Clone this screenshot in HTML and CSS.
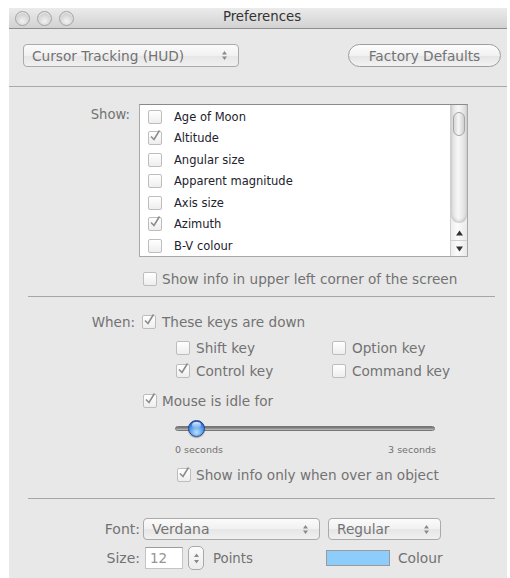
FILE: index.html
```html
<!DOCTYPE html>
<html>
<head>
<meta charset="utf-8">
<title>Preferences</title>
<link rel="stylesheet" href="styles.css">
</head>
<body>
<div class="window">
  <div class="titlebar">
    <div class="lights">
      <span class="light"></span><span class="light"></span><span class="light"></span>
    </div>
    <div class="title">Preferences</div>
  </div>

  <div class="toolbar">
    <div class="popup popup-mode">
      <span class="popup-text">Cursor Tracking (HUD)</span>
      <svg class="arrows" width="7" height="11" viewBox="0 0 7 11"><path d="M3.5 1 L6 4.5 H1 Z M3.5 10 L6 6.5 H1 Z" fill="#8a8a8a"/></svg>
    </div>
    <div class="pill">Factory Defaults</div>
  </div>

  <div class="content">
    <div class="field show-field">
      <div class="label label-show">Show:</div>
      <div class="listbox">
        <div class="rows">
          <div class="item"><span class="box"></span><span>Age of Moon</span></div>
          <div class="item"><span class="box checked"><svg width="14" height="14" viewBox="0 0 14 14"><path d="M3 7.5 L6 10.5 L11.5 1.5" fill="none" stroke="#8c8c8c" stroke-width="1.6"/></svg></span><span>Altitude</span></div>
          <div class="item"><span class="box"></span><span>Angular size</span></div>
          <div class="item"><span class="box"></span><span>Apparent magnitude</span></div>
          <div class="item"><span class="box"></span><span>Axis size</span></div>
          <div class="item"><span class="box checked"><svg width="14" height="14" viewBox="0 0 14 14"><path d="M3 7.5 L6 10.5 L11.5 1.5" fill="none" stroke="#8c8c8c" stroke-width="1.6"/></svg></span><span>Azimuth</span></div>
          <div class="item"><span class="box"></span><span>B-V colour</span></div>
        </div>
        <div class="scrollbar">
          <div class="track"><div class="thumb"></div></div>
          <div class="step step-up"><svg width="7" height="6" viewBox="0 0 7 6"><path d="M3.5 0.5 L7 5.5 H0 Z" fill="#333"/></svg></div>
          <div class="step step-down"><svg width="7" height="6" viewBox="0 0 7 6"><path d="M3.5 5.5 L7 0.5 H0 Z" fill="#333"/></svg></div>
        </div>
      </div>
    </div>

    <div class="check row-corner"><span class="box"></span><span>Show info in upper left corner of the screen</span></div>

    <div class="separator sep-1"></div>

    <div class="field when-field">
      <div class="label label-when">When:</div>
      <div class="check"><span class="box checked"><svg width="14" height="14" viewBox="0 0 14 14"><path d="M3 7.5 L6 10.5 L11.5 1.5" fill="none" stroke="#8c8c8c" stroke-width="1.6"/></svg></span><span>These keys are down</span></div>
    </div>

    <div class="keys keys-1">
      <div class="check key"><span class="box"></span><span>Shift key</span></div>
      <div class="check key"><span class="box"></span><span>Option key</span></div>
    </div>
    <div class="keys keys-2">
      <div class="check key"><span class="box checked"><svg width="14" height="14" viewBox="0 0 14 14"><path d="M3 7.5 L6 10.5 L11.5 1.5" fill="none" stroke="#8c8c8c" stroke-width="1.6"/></svg></span><span>Control key</span></div>
      <div class="check key"><span class="box"></span><span>Command key</span></div>
    </div>

    <div class="check row-idle"><span class="box checked"><svg width="14" height="14" viewBox="0 0 14 14"><path d="M3 7.5 L6 10.5 L11.5 1.5" fill="none" stroke="#8c8c8c" stroke-width="1.6"/></svg></span><span>Mouse is idle for</span></div>

    <div class="slider">
      <div class="slider-track"></div>
      <div class="knob"></div>
    </div>
    <div class="slider-labels"><span>0 seconds</span><span>3 seconds</span></div>

    <div class="check row-over"><span class="box checked"><svg width="14" height="14" viewBox="0 0 14 14"><path d="M3 7.5 L6 10.5 L11.5 1.5" fill="none" stroke="#8c8c8c" stroke-width="1.6"/></svg></span><span>Show info only when over an object</span></div>

    <div class="separator sep-2"></div>

    <div class="field font-field">
      <div class="label label-font">Font:</div>
      <div class="popup popup-font">
        <span class="popup-text">Verdana</span>
        <svg class="arrows" width="7" height="11" viewBox="0 0 7 11"><path d="M3.5 1 L6 4.5 H1 Z M3.5 10 L6 6.5 H1 Z" fill="#8a8a8a"/></svg>
      </div>
      <div class="popup popup-style">
        <span class="popup-text">Regular</span>
        <svg class="arrows" width="7" height="11" viewBox="0 0 7 11"><path d="M3.5 1 L6 4.5 H1 Z M3.5 10 L6 6.5 H1 Z" fill="#8a8a8a"/></svg>
      </div>
    </div>

    <div class="field size-field">
      <div class="label label-font">Size:</div>
      <div class="size-input">12</div>
      <div class="stepper"><svg width="7" height="13" viewBox="0 0 7 13"><path d="M3.5 1.5 L6 5 H1 Z M3.5 11.5 L6 8 H1 Z" fill="#8a8a8a"/></svg></div>
      <div class="unit">Points</div>
      <div class="swatch"></div>
      <div class="unit colour-label">Colour</div>
    </div>
  </div>
</div>
</body>
</html>
```

FILE: styles.css
```css
* { box-sizing: border-box; }

html, body {
  margin: 0;
  padding: 0;
  background: #ffffff;
}

body {
  font-family: "DejaVu Sans", "Liberation Sans", sans-serif;
  font-size: 12px;
  color: #727272;
}

.window {
  margin: 8px 0 0 9px;
  width: 498px;
  height: 570px;
  background: #e8e8e8;
  display: flex;
  flex-direction: column;
  overflow: hidden;
}

/* ---- title bar ---- */
.titlebar {
  height: 21px;
  flex: none;
  display: flex;
  align-items: center;
  position: relative;
  background: linear-gradient(#ebebeb, #d2d2d2);
  border-bottom: 1px solid #8e8e8e;
}

.lights {
  display: flex;
  gap: 7px;
  padding-left: 6px;
}

.light {
  width: 15px;
  height: 15px;
  border-radius: 50%;
  border: 1px solid #a4a4a4;
  background: radial-gradient(circle at 50% 70%, #f2f2f2 0%, #d6d6d6 55%, #bdbdbd 100%);
  box-shadow: inset 0 1px 1px rgba(255,255,255,0.7);
}

.title {
  position: absolute;
  left: 0;
  right: 0;
  text-align: center;
  top: 1px;
  font-size: 13.3px;
  color: #333333;
  padding-left: 8px;
}

/* ---- toolbar ---- */
.toolbar {
  height: 58px;
  flex: none;
  display: flex;
  align-items: flex-start;
  justify-content: space-between;
  padding: 15px 6px 0 14px;
  border-bottom: 1px solid #a9a9a9;
}

.popup {
  height: 23px;
  border: 1px solid #aaaaaa;
  border-radius: 4px;
  background: linear-gradient(#fbfbfb, #f1f1f1 50%, #e6e6e6 51%, #f0f0f0);
  display: flex;
  align-items: center;
  justify-content: space-between;
  padding: 0 10px 0 8px;
  color: #737373;
  font-size: 13.7px;
}

.popup-mode { width: 216px; }

.pill {
  width: 153px;
  height: 23px;
  border: 1px solid #9d9d9d;
  border-radius: 12px;
  background: linear-gradient(#fdfdfd, #f1f1f1 50%, #e4e4e4 51%, #f3f3f3);
  display: flex;
  align-items: center;
  justify-content: center;
  color: #737373;
  font-size: 13.7px;
}

/* ---- main content ---- */
.content {
  display: flex;
  flex-direction: column;
  flex: 1;
}

.field {
  display: flex;
  align-items: flex-start;
}

.label {
  flex: none;
  text-align: right;
  color: #727272;
}

.show-field { margin-top: 17px; }
.label-show { width: 121px; margin-right: 9px; padding-top: 3px; font-size: 13.2px; }

.listbox {
  width: 329px;
  height: 153px;
  background: #ffffff;
  border: 1px solid #a9a9a9;
  border-top-color: #8a8a8a;
  display: flex;
}

.rows {
  flex: 1;
  padding-top: 1px;
}

.item {
  height: 21.5px;
  display: flex;
  align-items: center;
  color: #22222c;
  font-size: 11.5px;
  padding-left: 8px;
}

.item .box { margin-right: 12px; }

.box {
  flex: none;
  width: 14px;
  height: 14px;
  border: 1px solid #bdbdbd;
  border-radius: 2px;
  background: linear-gradient(#ffffff, #eeeeee);
  display: inline-flex;
  position: relative;
}

.box svg {
  position: absolute;
  left: -1px;
  top: -3px;
}

.scrollbar {
  width: 17px;
  flex: none;
  border-left: 1px solid #cfcfcf;
  background: linear-gradient(90deg, #eeeeee, #fbfbfb 40%, #e9e9e9);
  display: flex;
  flex-direction: column;
}

.track {
  flex: 1;
  padding: 7px 1px 0 1px;
  border-bottom-left-radius: 8px;
  border-bottom-right-radius: 8px;
  background: linear-gradient(90deg, #dcdcdc, #f7f7f7 45%, #dadada);
  box-shadow: inset 0 -2px 3px rgba(0,0,0,0.15);
  margin-bottom: 3px;
}

.thumb {
  height: 24px;
  margin: 0 1px;
  border: 1px solid #a6a6a6;
  border-radius: 7px;
  background: linear-gradient(90deg, #d6d6d6, #f6f6f6 45%, #d0d0d0);
}

.step {
  height: 15px;
  display: flex;
  align-items: center;
  justify-content: center;
}

.step-up { border-bottom: 1px solid #cfcfcf; }

/* ---- checkbox rows ---- */
.check {
  display: flex;
  align-items: center;
  height: 18px;
  font-size: 13.6px;
  color: #727272;
  white-space: nowrap;
}

.check .box { margin-right: 5px; }

.row-corner { margin: 13px 0 0 134px; }

.separator {
  height: 1px;
  background: #a6a6a6;
  margin-left: 19px;
  width: 467px;
}

.sep-1 { margin-top: 8px; }

.when-field { margin-top: 16px; }
.label-when { width: 126px; margin-right: 7px; height: 18px; line-height: 18px; font-size: 13.5px; }
.when-field .check .box { margin-right: 6px; }

.keys {
  display: flex;
  margin-left: 167px;
}

.keys-1 { margin-top: 8px; }
.keys-2 { margin-top: 5px; }

.key { width: 156px; }
.key .box { margin-right: 6px; }

.row-idle { margin: 12px 0 0 134px; }

/* ---- slider ---- */
.slider {
  position: relative;
  height: 20px;
  margin: 8px 0 0 166px;
  width: 260px;
  display: flex;
  align-items: center;
}

.slider-track {
  width: 100%;
  height: 5px;
  border-radius: 3px;
  background: linear-gradient(#6e6e6e, #9a9a9a 60%, #c4c4c4);
  border: 1px solid #777777;
}

.knob {
  position: absolute;
  left: 13px;
  top: 2px;
  width: 17px;
  height: 17px;
  border-radius: 50%;
  background: radial-gradient(circle at 50% 75%, #bfe0ff 0%, #5aa2ee 45%, #1f63c9 80%, #17479a 100%);
  border: 1px solid #23438a;
  box-shadow: 0 1px 1px rgba(0,0,0,0.3);
}

.knob::after {
  content: "";
  position: absolute;
  left: 3px;
  top: 1px;
  width: 9px;
  height: 6px;
  border-radius: 50%;
  background: linear-gradient(rgba(255,255,255,0.9), rgba(255,255,255,0.1));
}

.slider-labels {
  display: flex;
  justify-content: space-between;
  width: 261px;
  margin: 6px 0 0 166px;
  height: 12px;
  font-size: 9.5px;
  line-height: 12px;
  color: #727272;
}

.row-over { margin: 10px 0 0 168px; }

.sep-2 { margin-top: 14px; }

/* ---- font rows ---- */
.font-field {
  margin-top: 19px;
  align-items: center;
}

.label-font { width: 131px; margin-right: 3px; font-size: 14px; }

.popup-font { width: 177px; height: 22px; font-size: 14px; }
.popup-style { width: 113px; height: 22px; margin-left: 8px; font-size: 13.7px; }

.size-field {
  margin-top: 6px;
  align-items: center;
  height: 24px;
}

.size-field .label-font { margin-right: 5px; }

.size-input {
  width: 38px;
  height: 22px;
  background: #ffffff;
  border: 1px solid #c4c4c4;
  border-top-color: #9c9c9c;
  padding: 2px 0 0 4px;
  font-size: 13.5px;
  color: #959595;
}

.stepper {
  width: 16px;
  height: 24px;
  margin-left: 5px;
  border: 1px solid #a9a9a9;
  border-radius: 5px;
  background: linear-gradient(#fbfbfb, #ececec);
  display: flex;
  align-items: center;
  justify-content: center;
}

.unit {
  font-size: 13.3px;
  color: #727272;
  margin-left: 9px;
}

.swatch {
  width: 64px;
  height: 16px;
  margin-left: 73px;
  background: #8dcdfc;
  border: 1px solid #9a9a9a;
}

.colour-label { margin-left: 8px; font-size: 13.8px; }
```
